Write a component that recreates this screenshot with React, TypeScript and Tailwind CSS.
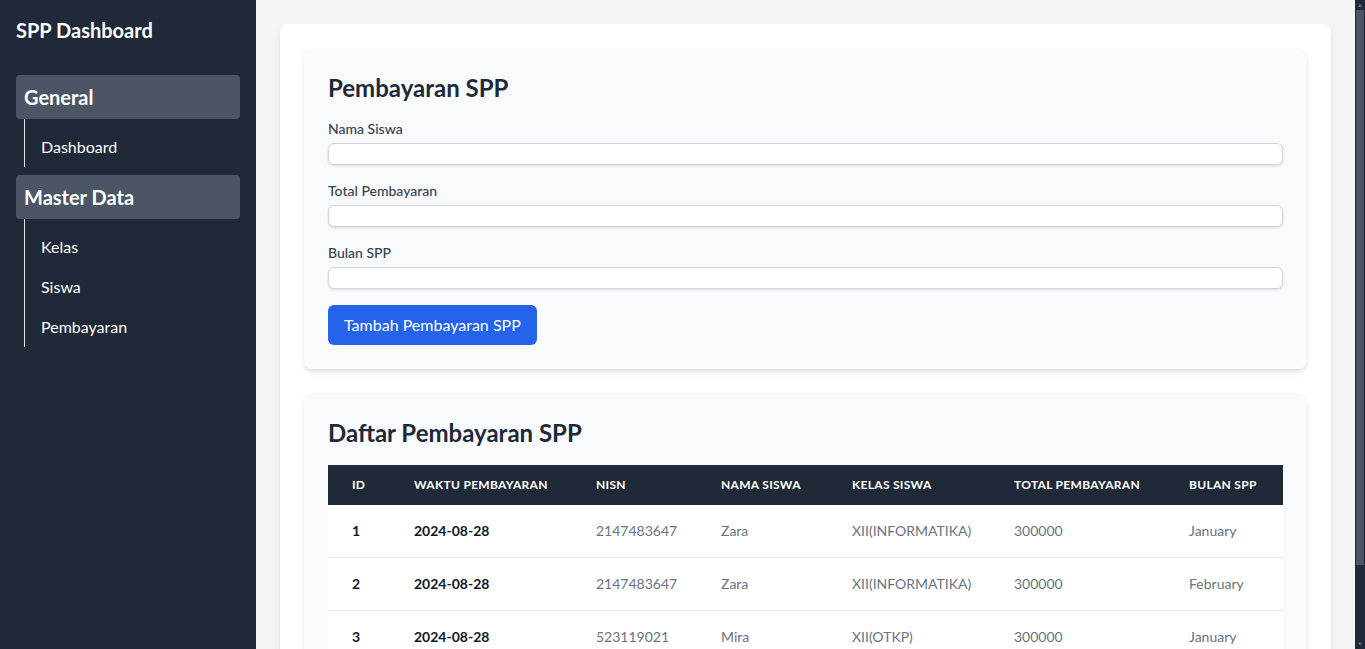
import React from "react";

const font = { fontFamily: 'Lato, "Open Sans", sans-serif' };

type Payment = {
  id: number;
  waktu: string;
  nisn: string;
  nama: string;
  kelas: string;
  total: string;
  bulan: string;
};

const payments: Payment[] = [
  { id: 1, waktu: "2024-08-28", nisn: "2147483647", nama: "Zara", kelas: "XII(INFORMATIKA)", total: "300000", bulan: "January" },
  { id: 2, waktu: "2024-08-28", nisn: "2147483647", nama: "Zara", kelas: "XII(INFORMATIKA)", total: "300000", bulan: "February" },
  { id: 3, waktu: "2024-08-28", nisn: "523119021", nama: "Mira", kelas: "XII(OTKP)", total: "300000", bulan: "January" },
];

function Sidebar() {
  return (
    <aside className="flex w-[256px] shrink-0 flex-col bg-[#1f2937] px-4 text-white">
      <h1 className="mb-[31px] pt-4 text-xl font-bold leading-7">SPP Dashboard</h1>
      <div className="flex flex-col gap-2">
        <div>
          <div className="flex h-[44px] items-center rounded bg-[#4b5563] px-2 text-xl font-bold">General</div>
          <ul className="ml-2 border-l border-gray-200 pt-2">
            <li className="py-2 pl-4 text-base leading-6">Dashboard</li>
          </ul>
        </div>
        <div>
          <div className="flex h-[44px] items-center rounded bg-[#4b5563] px-2 text-xl font-bold">Master Data</div>
          <ul className="ml-2 border-l border-gray-200 pt-2">
            <li className="py-2 pl-4 text-base leading-6">Kelas</li>
            <li className="py-2 pl-4 text-base leading-6">Siswa</li>
            <li className="py-2 pl-4 text-base leading-6">Pembayaran</li>
          </ul>
        </div>
      </div>
    </aside>
  );
}

function Field({ label }: { label: string }) {
  return (
    <div className="mb-4">
      <label className="mb-1 block text-sm font-medium leading-5 text-gray-700">{label}</label>
      <input className="block h-[22px] w-full rounded-md border border-gray-300 bg-white shadow-sm outline-none" />
    </div>
  );
}

function Scrollbar() {
  return (
    <div className="flex w-[10px] shrink-0 flex-col bg-[#1f2937]">
      <div className="flex h-[10px] items-center justify-center text-[6px] leading-none text-gray-500">▲</div>
      <div className="mx-[1px] h-[555px] bg-[#4b5563]" />
      <div className="flex-1" />
      <div className="flex h-[10px] items-center justify-center text-[6px] leading-none text-gray-500">▼</div>
    </div>
  );
}

export default function App() {
  return (
    <div className="flex h-[649px] overflow-hidden bg-[#f3f4f6]" style={font}>
      <Sidebar />
      <main className="flex-1 overflow-hidden p-6">
        <div className="rounded-lg bg-white p-6 shadow-md">
          <section className="mb-6 rounded-lg bg-gray-50 p-6 shadow-md">
            <h2 className="mb-[15px] text-2xl font-bold leading-8 text-gray-800">Pembayaran SPP</h2>
            <Field label="Nama Siswa" />
            <Field label="Total Pembayaran" />
            <Field label="Bulan SPP" />
            <button className="rounded-md bg-[#2563eb] px-4 py-2 text-base leading-6 text-white">Tambah Pembayaran SPP</button>
          </section>

          <section className="rounded-lg bg-gray-50 p-6 shadow-md">
            <h2 className="mb-4 text-2xl font-bold leading-8 text-gray-800">Daftar Pembayaran SPP</h2>
            <table className="w-full table-fixed bg-white">
              <colgroup>
                <col className="w-[62px]" />
                <col className="w-[182px]" />
                <col className="w-[125px]" />
                <col className="w-[131px]" />
                <col className="w-[162px]" />
                <col className="w-[175px]" />
                <col className="w-[118px]" />
              </colgroup>
              <thead className="bg-[#1f2937] text-left text-xs font-bold uppercase tracking-wide text-white">
                <tr>
                  <th className="px-6 py-3 leading-4">ID</th>
                  <th className="px-6 py-3 leading-4">Waktu Pembayaran</th>
                  <th className="px-6 py-3 leading-4">NISN</th>
                  <th className="px-6 py-3 leading-4">Nama Siswa</th>
                  <th className="px-6 py-3 leading-4">Kelas Siswa</th>
                  <th className="px-6 py-3 leading-4">Total Pembayaran</th>
                  <th className="px-6 py-3 leading-4">Bulan SPP</th>
                </tr>
              </thead>
              <tbody className="divide-y divide-gray-200 text-sm leading-5">
                {payments.map((p) => (
                  <tr key={p.id}>
                    <td className="px-6 py-4 font-bold text-gray-900">{p.id}</td>
                    <td className="px-6 py-4 font-bold text-gray-900">{p.waktu}</td>
                    <td className="px-6 py-4 text-gray-500">{p.nisn}</td>
                    <td className="px-6 py-4 text-gray-500">{p.nama}</td>
                    <td className="px-6 py-4 text-gray-500">{p.kelas}</td>
                    <td className="px-6 py-4 text-gray-500">{p.total}</td>
                    <td className="px-6 py-4 text-gray-500">{p.bulan}</td>
                  </tr>
                ))}
              </tbody>
            </table>
          </section>
        </div>
      </main>
      <Scrollbar />
    </div>
  );
}
